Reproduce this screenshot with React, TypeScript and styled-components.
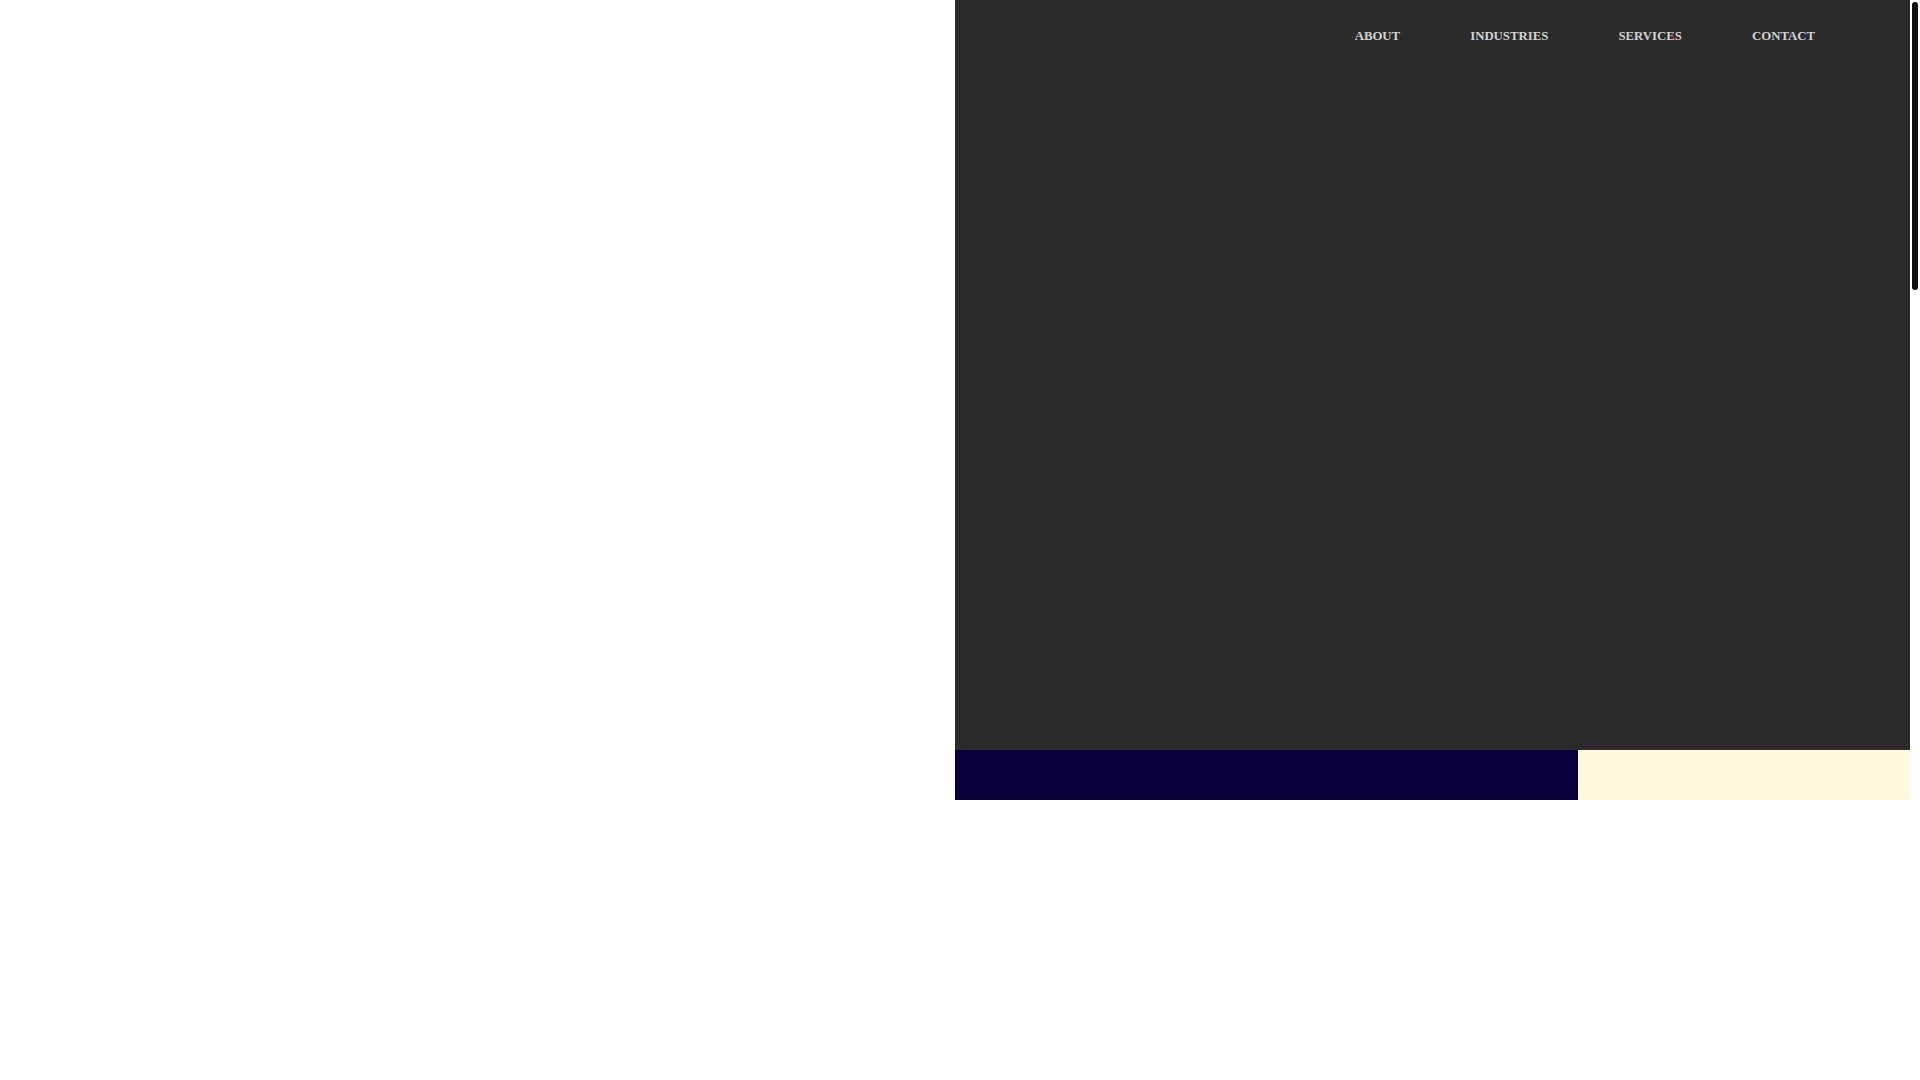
import React from 'react';
import styled, {createGlobalStyle} from "styled-components";

const GlobalStyle = createGlobalStyle`
  body {
    margin: 0;
    background: #fff;
    font-family: "Liberation Serif", "Times New Roman", serif;
    overflow: hidden;
  }
`;

const links = ["About", "Industries", "Services", "Contact"];

function App(): JSX.Element {
    return (
        <>
            <GlobalStyle/>
            <Page>
                <Blank/>
                <Side>
                    <Hero>
                        <Nav>
                            {links.map(l => (
                                <NavLink key={l} href="#">{l}</NavLink>
                            ))}
                        </Nav>
                    </Hero>
                    <Strip>
                        <Swatch color="#08003a" width="623px"/>
                        <Swatch color="#fff8dc"/>
                    </Strip>
                </Side>
                <Rail>
                    <Thumb/>
                </Rail>
            </Page>
        </>
    );
}

const Page = styled.div`
  display: grid;
  grid-template-columns: 1fr 1fr 10px;
  align-items: start;
  height: 100vh;
`;

const Blank = styled.div``;

const Side = styled.div`
  display: flex;
  flex-direction: column;
`;

const Hero = styled.header`
  height: 750px;
  background: #2b2b2b;
`;

const Nav = styled.nav`
  display: flex;
  justify-content: flex-end;
  gap: 70px;
  padding: 28px 95px 0 0;
`;

const NavLink = styled.a`
  color: #d2d2d2;
  font-size: 12.8px;
  font-weight: 700;
  line-height: 16px;
  text-transform: uppercase;
  text-decoration: none;
`;

const Strip = styled.div`
  display: flex;
  height: 50px;
`;

const Swatch = styled.div<{ color: string; width?: string }>`
  background: ${p => p.color};
  flex: ${p => (p.width ? `0 0 ${p.width}` : "1")};
`;

// page scrollbar, as it shows in the screenshot
const Rail = styled.div`
  height: 100vh;
  padding: 2px 2px 0 2px;
  box-sizing: border-box;
`;

const Thumb = styled.div`
  width: 6px;
  height: 288px;
  border-radius: 3px;
  background: #111;
`;

export default App;
